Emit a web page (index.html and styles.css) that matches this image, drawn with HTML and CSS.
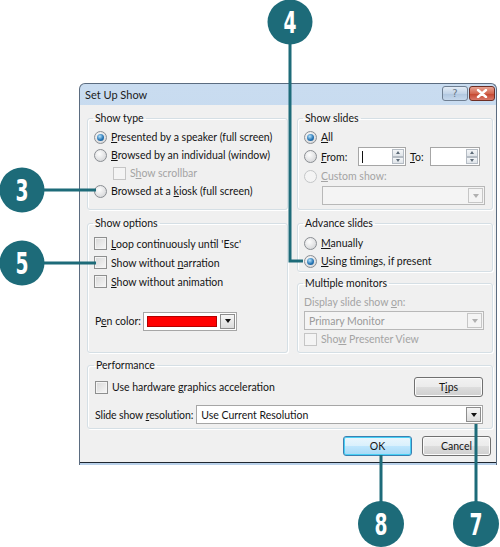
FILE: index.html
```html
<!DOCTYPE html>
<html>
<head>
<meta charset="utf-8">
<link rel="stylesheet" href="styles.css">
</head>
<body>
<div class="stage">

  <div class="dialog">
    <div class="titlebar">
      <span class="title">Set Up Show</span>
      <div class="caption-btns">
        <span class="cbtn help">?</span>
        <span class="cbtn close">
          <svg width="12" height="9" viewBox="0 0 12 9"><path d="M2 1 L10 8 M10 1 L2 8" stroke="#fff" stroke-width="2.4" stroke-linecap="round"/></svg>
        </span>
      </div>
    </div>

    <div class="client">
      <div class="columns">
        <div class="col">
          <fieldset class="group g-type">
            <legend>Show type</legend>
            <div class="row"><span class="radio on"></span><span><u>P</u>resented by a speaker (full screen)</span></div>
            <div class="row"><span class="radio"></span><span><u>B</u>rowsed by an individual (window)</span></div>
            <div class="row indent disabled"><span class="check off"></span><span>S<u>h</u>ow scrollbar</span></div>
            <div class="row"><span class="radio"></span><span>Browsed at a <u>k</u>iosk (full screen)</span></div>
          </fieldset>

          <fieldset class="group g-options">
            <legend>Show options</legend>
            <div class="row tall"><span class="check"></span><span><u>L</u>oop continuously until 'Esc'</span></div>
            <div class="row tall"><span class="check"></span><span>Show without <u>n</u>arration</span></div>
            <div class="row tall"><span class="check"></span><span><u>S</u>how without animation</span></div>
            <div class="pen-row">
              <span class="pen-label">P<u>e</u>n color:</span>
              <span class="color-pick">
                <span class="swatch"></span>
                <span class="arrow-btn"><i class="tri"></i></span>
              </span>
            </div>
          </fieldset>
        </div>

        <div class="col">
          <fieldset class="group g-slides">
            <legend>Show slides</legend>
            <div class="row"><span class="radio on"></span><span><u>A</u>ll</span></div>
            <div class="row from-row">
              <span class="radio"></span>
              <span class="from-label"><u>F</u>rom:</span>
              <span class="spin w48"><span class="caret"></span><span class="spin-btns"><i class="up"></i><i class="down"></i></span></span>
              <span class="to-label"><u>T</u>o:</span>
              <span class="spin w50"><span class="spin-btns"><i class="up"></i><i class="down"></i></span></span>
            </div>
            <div class="row disabled"><span class="radio off"></span><span><u>C</u>ustom show:</span></div>
            <div class="combo off custom"><span class="combo-text"></span><span class="arrow-btn"><i class="tri"></i></span></div>
          </fieldset>

          <fieldset class="group g-advance">
            <legend>Advance slides</legend>
            <div class="row"><span class="radio"></span><span><u>M</u>anually</span></div>
            <div class="row"><span class="radio on"></span><span><u>U</u>sing timings, if present</span></div>
          </fieldset>

          <fieldset class="group g-monitors">
            <legend>Multiple monitors</legend>
            <div class="caption disabled">Display slide show <u>o</u>n:</div>
            <div class="combo off monitor"><span class="combo-text">Primary Monitor</span><span class="arrow-btn"><i class="tri"></i></span></div>
            <div class="row disabled"><span class="check off"></span><span>Sho<u>w</u> Presenter View</span></div>
          </fieldset>
        </div>
      </div>

      <fieldset class="group g-perf">
        <legend>Performance</legend>
        <div class="perf-top">
          <div class="row"><span class="check"></span><span>Use hardware <u>g</u>raphics acceleration</span></div>
          <span class="btn tips">T<u>i</u>ps</span>
        </div>
        <div class="perf-res">
          <span class="res-label">Slide show <u>r</u>esolution:</span>
          <div class="combo res"><span class="combo-text">Use Current Resolution</span><span class="arrow-btn"><i class="tri"></i></span></div>
        </div>
      </fieldset>

      <div class="buttons">
        <span class="btn default">OK</span>
        <span class="btn">Cancel</span>
      </div>
    </div>
  </div>

  <svg class="callouts" width="500" height="547" viewBox="0 0 500 547">
    <g stroke="#1d6b79" stroke-width="3" fill="none">
      <path d="M290 40 V261 H303"/>
      <path d="M40 190 H96"/>
      <path d="M40 263 H96"/>
      <path d="M381 505 V455"/>
      <path d="M476 505 V424"/>
    </g>
    <g fill="#1d6b79">
      <circle cx="290" cy="22" r="22.5"/>
      <circle cx="22" cy="190" r="22.5"/>
      <circle cx="22" cy="263" r="22.5"/>
      <circle cx="381" cy="524" r="23"/>
      <circle cx="476" cy="524" r="23"/>
    </g>
    <g class="num">
      <text x="283.5" y="33" textLength="13" lengthAdjust="spacingAndGlyphs">4</text>
      <text x="15.5" y="201" textLength="13" lengthAdjust="spacingAndGlyphs">3</text>
      <text x="15.5" y="274" textLength="13" lengthAdjust="spacingAndGlyphs">5</text>
      <text x="374.5" y="535" textLength="13" lengthAdjust="spacingAndGlyphs">8</text>
      <text x="469.5" y="535" textLength="13" lengthAdjust="spacingAndGlyphs">7</text>
    </g>
  </svg>

</div>
</body>
</html>
```

FILE: styles.css
```css
body {
    margin: 0;
    background: #fff;
}

.stage {
    position: relative;
    width: 500px;
    height: 547px;
    overflow: hidden;
    font-family: "Segoe UI", Lato, "Open Sans", sans-serif;
    font-size: 10.5px;
    color: #141414;
}

u { text-decoration: underline; text-underline-offset: 1px; }

/* window frame */
.dialog {
    margin: 83px 0 0 79px;
    width: 418px;
    box-sizing: border-box;
    border: 1px solid #5b6c80;
    border-bottom: 0;
    border-radius: 6px 6px 0 0;
    background: linear-gradient(#c9dcf0, #b9d1ea);
    padding-bottom: 2px;
}

.titlebar {
    height: 21px;
    display: flex;
    justify-content: space-between;
    align-items: flex-start;
    padding: 0 1px 0 5px;
}
.title {
    font-size: 11px;
    line-height: 21px;
    color: #1b1b1b;
}
.caption-btns { display: flex; gap: 1px; margin-top: 2px; }
.cbtn {
    width: 26px;
    height: 15px;
    box-sizing: border-box;
    border: 1px solid #6f7f92;
    border-radius: 3px;
    display: flex;
    align-items: center;
    justify-content: center;
}
.cbtn.help {
    background: linear-gradient(#e3ecf6, #c2d4e8 50%, #afc6df 51%, #c6d8ec);
    color: #6a7888;
    font-family: "DejaVu Sans", sans-serif;
    font-size: 10px;
    line-height: 13px;
}
.cbtn.close {
    border-color: #6d2e24;
    background: linear-gradient(#e8a493, #d2664f 50%, #c3442c 51%, #d8796a);
}

.client {
    background: #f0f0f0;
    border-bottom: 1px solid #1e2630;
    padding: 6px 3px 6px 7px;
}

.columns {
    display: grid;
    grid-template-columns: 201px 196px;
    gap: 9px;
}
.col { display: flex; flex-direction: column; }

/* group boxes */
.group {
    margin: 0;
    padding: 0 6px;
    min-width: 0;
    box-sizing: border-box;
    border: 1px solid #d5dfe5;
    border-radius: 3px;
    box-shadow: inset 1px 1px 0 #fff, 1px 1px 0 #fff;
}
.group legend {
    padding: 0 2px;
    margin-left: -1px;
    line-height: 14px;
}
.g-type { height: 99px; padding-top: 3px; }
.g-options { height: 137px; margin-top: 6px; padding-top: 4px; }
.g-slides { height: 99px; padding-top: 3px; }
.g-advance { height: 56px; margin-top: 6px; padding-top: 4px; }
.g-monitors { height: 77px; margin-top: 4px; }
.g-perf { height: 71px; margin-top: 5px; padding: 5px 9px 0 7px; }

.row {
    display: flex;
    align-items: center;
    gap: 4px;
    height: 18px;
    white-space: nowrap;
}
.row.tall { height: 19px; }
.row.indent { padding-left: 19px; }
.disabled { color: #a4a4a4; }

/* radios and checks */
.radio {
    width: 13px;
    height: 13px;
    box-sizing: border-box;
    border-radius: 50%;
    border: 1px solid #8a8e93;
    background: radial-gradient(circle at 40% 35%, #fdfdfd, #d9dadc 75%);
    flex: none;
    display: flex;
    align-items: center;
    justify-content: center;
}
.radio.on::after {
    content: "";
    width: 7px;
    height: 7px;
    border-radius: 50%;
    background: radial-gradient(circle at 40% 35%, #b7e3fb, #2a78b7 55%, #0e4a7e);
}
.radio.off { border-color: #c4c6c8; background: #f4f4f4; }

.check {
    width: 13px;
    height: 13px;
    box-sizing: border-box;
    border: 1px solid #8e8f8f;
    background: linear-gradient(135deg, #d8d8d8, #f7f7f7);
    box-shadow: inset 0 0 0 1px #f4f4f4;
    flex: none;
}
.check.off { border-color: #c5c5c5; background: #f4f4f4; }

/* pen colour */
.pen-row {
    display: flex;
    align-items: center;
    height: 20px;
    margin-top: 20px;
    margin-left: 1px;
}
.pen-label { width: 48px; }
.color-pick {
    display: flex;
    align-items: center;
    gap: 3px;
    width: 94px;
    height: 19px;
    box-sizing: border-box;
    border: 1px solid #a6a6a6;
    background: #fff;
    padding: 0 1px 0 3px;
}
.swatch {
    width: 71px;
    height: 11px;
    background: #f00;
    border: 1px solid #b30000;
    box-sizing: border-box;
}

/* combo and arrow */
.arrow-btn {
    width: 15px;
    height: 15px;
    box-sizing: border-box;
    border: 1px solid #8d8d8d;
    background: linear-gradient(#f6f6f6, #dcdcdc);
    display: flex;
    align-items: center;
    justify-content: center;
    flex: none;
}
.tri {
    width: 0;
    height: 0;
    border-left: 3.5px solid transparent;
    border-right: 3.5px solid transparent;
    border-top: 4px solid #111;
}
.combo {
    display: flex;
    align-items: center;
    height: 19px;
    box-sizing: border-box;
    border: 1px solid #a6a6a6;
    background: #fff;
    padding: 0 1px 0 4px;
}
.combo-text { flex: 1; white-space: nowrap; }
.combo.off { background: #f4f4f4; border-color: #b8b8b8; color: #9a9a9a; }
.combo.off .arrow-btn { border-color: #c6c6c6; background: #f4f4f4; }
.combo.off .tri { border-top-color: #b0b0b0; }
.combo.custom { width: 163px; margin: 1px 0 0 18px; }
.combo.monitor { width: 180px; margin-top: 1px; }
.combo.res { flex: 1; }

/* show slides spinners */
.from-row { height: 21px; gap: 0; }
.from-row .radio { margin-right: 4px; }
.from-label { width: 37px; }
.to-label { width: 24px; padding-left: 4px; box-sizing: border-box; }
.spin {
    display: flex;
    align-items: center;
    height: 19px;
    box-sizing: border-box;
    border: 1px solid #a6a6a6;
    background: #fff;
    padding: 0 1px 0 3px;
}
.spin.w48 { width: 48px; }
.spin.w50 { width: 50px; }
.caret { width: 1px; height: 12px; background: #111; }
.spin-btns {
    margin-left: auto;
    display: flex;
    flex-direction: column;
    width: 12px;
    height: 15px;
}
.spin-btns i {
    flex: 1;
    border: 1px solid #b5bcc4;
    background: linear-gradient(#f4f6f8, #dfe4e9);
    display: flex;
    align-items: center;
    justify-content: center;
}
.spin-btns i::after {
    content: "";
    border-left: 2.5px solid transparent;
    border-right: 2.5px solid transparent;
}
.spin-btns .up::after { border-bottom: 3px solid #5d6b78; }
.spin-btns .down::after { border-top: 3px solid #5d6b78; }

.caption { height: 16px; line-height: 16px; margin-top: 4px; }

/* performance */
.perf-top {
    display: flex;
    justify-content: space-between;
    align-items: center;
    height: 20px;
}
.perf-res {
    display: flex;
    align-items: center;
    gap: 3px;
    margin-top: 8px;
}
.res-label { white-space: nowrap; letter-spacing: -0.1px; }

/* push buttons */
.btn {
    width: 69px;
    height: 20px;
    box-sizing: border-box;
    border: 1px solid #707070;
    border-radius: 3px;
    background: linear-gradient(#f2f2f2 0%, #ebebeb 50%, #dddddd 51%, #cfcfcf 100%);
    box-shadow: inset 0 0 0 1px #fbfbfb;
    display: flex;
    align-items: center;
    justify-content: center;
}
.btn.default {
    border-color: #3c7fb1;
    background: linear-gradient(#eaf6fd 0%, #d9f0fc 50%, #bee6fd 51%, #a7d9f5 100%);
    box-shadow: inset 0 0 0 1px #48d0f5;
}
.buttons {
    display: flex;
    justify-content: flex-end;
    gap: 10px;
    margin-top: 7px;
    padding-right: 2px;
}

/* callouts */
.callouts {
    position: absolute;
    left: 0;
    top: 0;
    pointer-events: none;
}
.num text {
    fill: #fff;
    font-family: "DejaVu Sans", sans-serif;
    font-weight: bold;
    font-size: 30px;
}
```
